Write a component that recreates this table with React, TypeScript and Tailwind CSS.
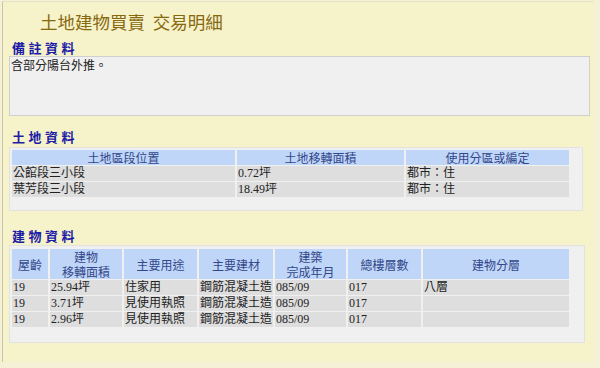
import React from "react";

const body = { fontFamily: '"Liberation Serif", "Noto Sans CJK TC", serif' };
const cjk = { fontFamily: '"Noto Sans CJK TC", "Noto Sans", sans-serif' };

function Heading({ text }: { text: string }) {
  return (
    <div
      className="pl-[9px] h-[16px] leading-[16px] text-[13px] font-bold text-[#1c1ca8] tracking-[3.5px]"
      style={cjk}
    >
      {text}
    </div>
  );
}

const landRows = [
  ["公館段三小段", "0.72坪", "都市：住"],
  ["葉芳段三小段", "18.49坪", "都市：住"],
];

const bldRows = [
  ["19", "25.94坪", "住家用", "鋼筋混凝土造", "085/09", "017", "八層"],
  ["19", "3.71坪", "見使用執照", "鋼筋混凝土造", "085/09", "017", ""],
  ["19", "2.96坪", "見使用執照", "鋼筋混凝土造", "085/09", "017", ""],
];

const bldHead: (string | string[])[] = [
  "屋齡",
  ["建物", "移轉面積"],
  "主要用途",
  "主要建材",
  ["建築", "完成年月"],
  "總樓層數",
  "建物分層",
];
const bldW = [36, 72, 73, 74, 71, 73, 146];

export default function App() {
  return (
    <div className="w-[600px] h-[368px] bg-[#f4f1d6] overflow-hidden" style={body}>
      <div className="ml-[2px] mt-[1px] w-[592px] h-[361px] bg-[#f6f2c9] border-l-[1px] border-t-[1px] border-l-[#c9c6a8] border-t-[#e6e2c4]">
        <div
          className="pl-[37px] pt-[8px] h-[38px] text-[17.5px] leading-[24px] text-[#86680f]"
          style={cjk}
        >
          土地建物買賣&nbsp;&nbsp;交易明細
        </div>
        <Heading text="備註資料" />
        <div
          className="ml-[6px] w-[581px] h-[60px] bg-[#f0f0f0] border border-[#cfcfcf] pl-[1px] pt-[1px] text-[12px] leading-[14px] text-[#222]"
          style={cjk}
        >
          含部分陽台外推。
        </div>
        <div className="h-[13px]" />
        <Heading text="土地資料" />
        <div className="ml-[6px] mt-[2px] w-[574px] h-[64px] bg-[#f0f0f0] border border-[#e2e2e2] pt-[1px]">
          <table className="border-separate border-spacing-x-[2px] border-spacing-y-[1px] text-[12px] leading-[15px] text-[#222]">
            <thead>
              <tr className="h-[15px]">
                {[
                  ["土地區段位置", 223],
                  ["土地移轉面積", 167],
                  ["使用分區或編定", 163],
                ].map(([t, w]) => (
                  <th
                    key={t as string}
                    className="bg-[#bfd6f8] font-normal text-center text-[#33468a] p-0"
                    style={{ width: w as number, ...cjk }}
                  >
                    {t}
                  </th>
                ))}
              </tr>
            </thead>
            <tbody>
              {landRows.map((r, i) => (
                <tr key={i} className="h-[15px]">
                  {r.map((c, j) => (
                    <td key={j} className="bg-[#dedede] p-0 pl-[1px] align-middle">
                      {c}
                    </td>
                  ))}
                </tr>
              ))}
            </tbody>
          </table>
        </div>
        <div className="h-[17px]" />
        <Heading text="建物資料" />
        <div className="ml-[6px] mt-[1px] w-[576px] h-[98px] bg-[#f0f0f0] border border-[#e2e2e2] pt-[2px]">
          <table className="border-separate border-spacing-x-[2px] border-spacing-y-[1px] text-[12px] leading-[15px] text-[#222]">
            <thead>
              <tr className="h-[30px]">
                {bldHead.map((h, i) => (
                  <th
                    key={i}
                    className="bg-[#bfd6f8] font-normal text-center text-[#33468a] p-0 align-middle"
                    style={{ width: bldW[i], ...cjk }}
                  >
                    {Array.isArray(h) ? (
                      <div className="flex flex-col items-center">
                        <div className="h-[15px] leading-[15px] text-[12px]">{h[0]}</div>
                        <div className="h-[15px] leading-[15px] text-[12px]">{h[1]}</div>
                      </div>
                    ) : (
                      h
                    )}
                  </th>
                ))}
              </tr>
            </thead>
            <tbody>
              {bldRows.map((r, i) => (
                <tr key={i} className="h-[15px]">
                  {r.map((c, j) => (
                    <td key={j} className="bg-[#dedede] p-0 pl-[1px] align-middle whitespace-nowrap">
                      {c}
                    </td>
                  ))}
                </tr>
              ))}
            </tbody>
          </table>
        </div>
      </div>
    </div>
  );
}
